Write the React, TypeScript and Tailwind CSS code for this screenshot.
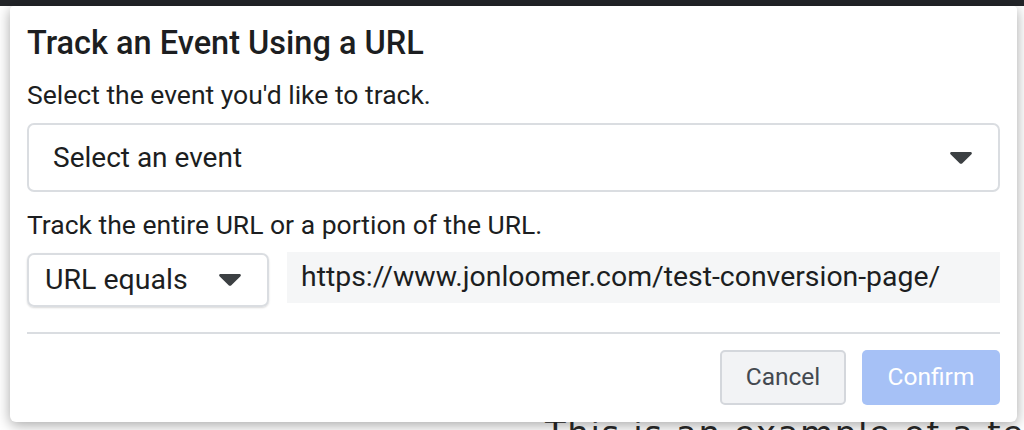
import React from 'react';

function Caret({ className }: { className?: string }) {
  return (
    <svg className={className} viewBox="0 0 22 12" fill="#3c4043">
      <path d="M1.5 0h19c1.2 0 1.8 1.4 1 2.3l-9.4 9.1c-.6.6-1.6.6-2.2 0L.5 2.3C-.3 1.4.3 0 1.5 0z" />
    </svg>
  );
}

export default function App() {
  return (
    <div
      className="relative flex h-[430px] w-[1024px] flex-col overflow-hidden bg-white"
      style={{ fontFamily: 'Roboto, "Liberation Sans", sans-serif' }}
    >
      <div className="h-[6px] w-full shrink-0 bg-[#222428]" />

      <div className="relative z-10 ml-[10px] mr-[7px] flex h-[416px] shrink-0 flex-col rounded-b-[6px] rounded-t-[4px] bg-white pl-[17px] pr-[17px] pt-[17px] shadow-[0_3px_14px_rgba(0,0,0,0.35)]">
        <h1 className="text-[32.5px] font-medium leading-[40px] text-[#1c1e21]">
          Track an Event Using a URL
        </h1>
        <p className="mt-[16px] text-[26.5px] leading-[32px] text-[#1c1e21]">
          Select the event you'd like to track.
        </p>

        <div className="mt-[12px] flex h-[69px] items-center justify-between rounded-[7px] border-2 border-[#dadde1] pl-[24px] pr-[26px]">
          <span className="text-[28px] text-[#1c1e21]">Select an event</span>
          <Caret className="h-[12px] w-[22px]" />
        </div>

        <p className="mt-[17px] text-[26.5px] leading-[32px] text-[#1c1e21]">
          Track the entire URL or a portion of the URL.
        </p>

        <div className="mt-[12px] flex items-start gap-[18px]">
          <div className="flex h-[54px] w-[242px] items-center justify-between rounded-[7px] border-2 border-[#dadde1] pl-[16px] pr-[26px] shadow-[0_1px_2px_rgba(0,0,0,0.15)]">
            <span className="text-[28.5px] text-[#1c1e21]">URL equals</span>
            <Caret className="h-[12px] w-[22px]" />
          </div>
          <div className="-mt-[1px] flex h-[51px] flex-1 items-center bg-[#f5f6f7] pl-[14px] text-[28.4px] text-[#1c1e21]">
            https://www.jonloomer.com/test-conversion-page/
          </div>
        </div>

        <div className="mt-[25px] h-[2px] bg-[#dadde1]" />

        <div className="mt-[16px] flex justify-end gap-[16px]">
          <button className="h-[55px] w-[126px] rounded-[5px] border-2 border-[#d4d7dc] bg-[#f2f3f5] text-[24.5px] text-[#444950]">
            Cancel
          </button>
          <button className="h-[55px] w-[138px] rounded-[5px] bg-[#a6c1f6] text-[24.5px] text-white">
            Confirm
          </button>
        </div>
      </div>

      <div
        className="-mt-[6px] overflow-hidden pl-[545px] text-[34px] leading-[34px] tracking-[1.6px] whitespace-nowrap text-[#2a2a2a]"
        style={{ fontFamily: '"DejaVu Sans", sans-serif' }}
      >
        This is an example of a test page
      </div>
    </div>
  );
}
